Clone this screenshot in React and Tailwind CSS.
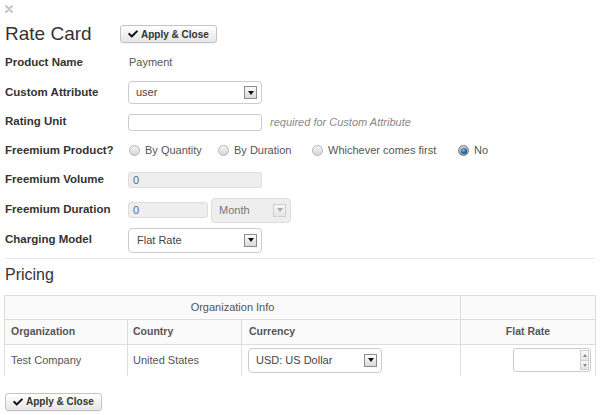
import React from "react";
import { FaCheck } from "react-icons/fa";

function Btn() {
  return (
    <button className="flex items-center gap-[3px] h-[18px] px-[7px] border border-[#c4c4c4] rounded-[3px] bg-gradient-to-b from-white to-[#e6e6e6] text-[10px] font-bold text-[#333] shadow-[0_1px_1px_rgba(0,0,0,0.06)]">
      <FaCheck className="w-[10px] h-[10px] text-[#111]" />
      <span>Apply &amp; Close</span>
    </button>
  );
}

function Arrow({ disabled }) {
  return (
    <span
      className={
        "flex items-center justify-center w-[13px] h-[13px] border " +
        (disabled
          ? "border-[#cfcfcf] bg-gradient-to-b from-[#f6f6f6] to-[#e6e6e6]"
          : "border-[#8c8c8c] bg-gradient-to-b from-[#fbfbfb] to-[#d9d9d9]")
      }
    >
      <span
        className={
          "w-0 h-0 border-l-[3px] border-r-[3px] border-t-[4px] border-l-transparent border-r-transparent " +
          (disabled ? "border-t-[#aaa]" : "border-t-[#111]")
        }
      />
    </span>
  );
}

function Select({ value, w = "w-[134px]", h = "h-[23px]", disabled, pl = "pl-[7px]" }) {
  return (
    <div
      className={
        "flex items-center shrink-0 border rounded-[4px] text-[11px] pr-[4px] " +
        w + " " + h + " " + pl + " " +
        (disabled ? "bg-[#eee] border-[#ddd] text-[#777]" : "bg-white border-[#ccc] text-[#444]")
      }
    >
      <span>{value}</span>
      <span className="ml-auto">
        <Arrow disabled={disabled} />
      </span>
    </div>
  );
}

function Radio({ checked, label, w }) {
  return (
    <div className={"flex items-center shrink-0 " + (w || "")}>
      <span
        className={
          "flex items-center justify-center w-[11px] h-[11px] rounded-full border " +
          (checked
            ? "border-[#7a7a7a] bg-gradient-to-b from-[#cfcfcf] to-[#9a9a9a]"
            : "border-[#b5b5b5] bg-gradient-to-b from-[#f4f4f4] to-[#d6d6d6]")
        }
      >
        {checked && (
          <span className="w-[6px] h-[6px] rounded-full bg-[radial-gradient(circle_at_40%_35%,#7fc0f0,#1463a8_55%,#0b3a66)]" />
        )}
      </span>
      <span className="ml-[5px] text-[11px] text-[#555]">{label}</span>
    </div>
  );
}

function Label({ children }) {
  return <div className="w-[123px] shrink-0 text-[11.5px] font-bold text-[#333]">{children}</div>;
}

export default function App() {
  return (
    <div className="w-[600px] h-[415px] overflow-hidden bg-white font-['Liberation_Sans',Arial,sans-serif] text-[#333]">
      <div className="h-[20px] pl-[5px] pt-[5px]">
        <svg width="8" height="8" viewBox="0 0 8 8">
          <path d="M1 1L7 7M7 1L1 7" stroke="#c2c2c2" strokeWidth="1.8" strokeLinecap="round" />
        </svg>
      </div>
      <div className="flex items-center h-[28px] pl-[5px]">
        <div className="w-[115px] text-[19px] leading-[28px] text-[#333]">Rate Card</div>
        <Btn />
      </div>

      <div className="pl-[5px]">
        <div className="flex items-center h-[29px]">
          <Label>Product Name</Label>
          <div className="ml-[1px] text-[11px] text-[#555]">Payment</div>
        </div>
        <div className="flex items-center h-[31px]">
          <Label>Custom Attribute</Label>
          <Select value="user" />
        </div>
        <div className="flex items-center h-[28px]">
          <Label>Rating Unit</Label>
          <div className="w-[134px] h-[17px] border border-[#ccc] rounded-[3px] bg-white" />
          <div className="ml-[8px] text-[11px] italic text-[#888]">required for Custom Attribute</div>
        </div>
        <div className="flex items-center h-[29px]">
          <Label>Freemium Product?</Label>
          <div className="flex items-center ml-[1px]">
            <Radio label="By Quantity" w="w-[89px]" />
            <Radio label="By Duration" w="w-[94px]" />
            <Radio label="Whichever comes first" w="w-[146px]" />
            <Radio label="No" checked />
          </div>
        </div>
        <div className="flex items-center h-[30px]">
          <Label>Freemium Volume</Label>
          <div className="flex items-center w-[134px] h-[16px] border border-[#ddd] rounded-[3px] bg-[#eee] pl-[4px] text-[11px] text-[#666]">0</div>
        </div>
        <div className="flex items-center h-[30px]">
          <Label>Freemium Duration</Label>
          <div className="flex items-center w-[80px] h-[16px] border border-[#ddd] rounded-[3px] bg-[#eee] pl-[4px] text-[11px] text-[#666]">0</div>
          <div className="ml-[3px]">
            <Select value="Month" w="w-[80px]" h="h-[25px]" disabled pl="pl-[7px]" />
          </div>
        </div>
        <div className="flex items-center h-[30px]">
          <Label>Charging Model</Label>
          <Select value="Flat Rate" h="h-[25px]" pl="pl-[8px]" />
        </div>
        <div className="mt-[3px] mr-[5px] border-t border-[#e8e8e8]" />
        <div className="h-[31px] leading-[31px] text-[16px] text-[#333]">Pricing</div>
      </div>

      <div className="pl-[4px] mt-[5px]">
        <table className="table-fixed w-[591px] border-collapse text-[11px] text-[#555]">
          <colgroup>
            <col className="w-[123px]" />
            <col className="w-[114px]" />
            <col className="w-[219px]" />
            <col className="w-[135px]" />
          </colgroup>
          <thead>
            <tr className="h-[24px] bg-[#fafafa]">
              <th colSpan={3} className="border border-[#ddd] font-normal text-center p-0">Organization Info</th>
              <th className="border border-[#ddd] p-0" />
            </tr>
            <tr className="h-[25px] bg-[#fafafa]">
              <th className="border border-[#ddd] text-left pl-[6px] font-bold text-[10.5px] p-0">Organization</th>
              <th className="border border-[#ddd] text-left pl-[5px] font-bold text-[10.5px] p-0">Country</th>
              <th className="border border-[#ddd] text-left pl-[7px] font-bold text-[10.5px] p-0">Currency</th>
              <th className="border border-[#ddd] text-center font-bold text-[10.5px] p-0">Flat Rate</th>
            </tr>
          </thead>
          <tbody>
            <tr className="h-[31px]">
              <td className="border-x border-t border-[#ddd] pl-[6px] p-0">Test Company</td>
              <td className="border-x border-t border-[#ddd] pl-[5px] p-0">United States</td>
              <td className="border-x border-t border-[#ddd] pl-[6px] p-0">
                <Select value="USD: US Dollar" w="w-[134px]" h="h-[25px]" pl="pl-[7px]" />
              </td>
              <td className="border-x border-t border-[#ddd] p-0">
                <div className="flex justify-end pr-[4px]">
                  <div className="flex w-[78px] h-[24px] border border-[#ccc] rounded-[3px] bg-white">
                    <div className="flex-1" />
                    <div className="flex flex-col w-[9px] my-[1px] mr-[1px]">
                      <div className="flex-1 flex items-center justify-center border border-[#cfcfcf] bg-gradient-to-b from-[#fafafa] to-[#e4e4e4]">
                        <span className="w-0 h-0 border-l-[2px] border-r-[2px] border-b-[3px] border-l-transparent border-r-transparent border-b-[#888]" />
                      </div>
                      <div className="flex-1 flex items-center justify-center border border-t-0 border-[#cfcfcf] bg-gradient-to-b from-[#fafafa] to-[#e4e4e4]">
                        <span className="w-0 h-0 border-l-[2px] border-r-[2px] border-t-[3px] border-l-transparent border-r-transparent border-t-[#888]" />
                      </div>
                    </div>
                  </div>
                </div>
              </td>
            </tr>
          </tbody>
        </table>
      </div>

      <div className="pl-[5px] mt-[17px]">
        <Btn />
      </div>
    </div>
  );
}
